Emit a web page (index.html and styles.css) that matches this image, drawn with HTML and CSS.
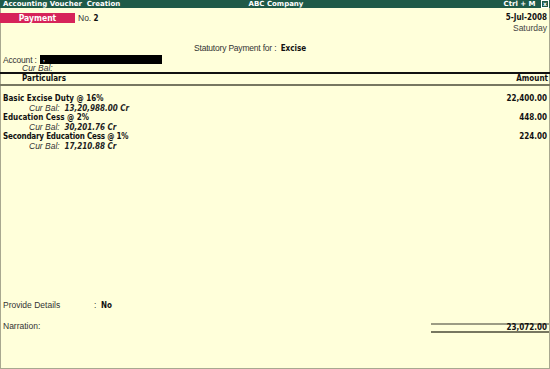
FILE: index.html
```html
<!DOCTYPE HTML>
<html>
<head>
	<meta http-equiv="content-type" content="text/html; charset=utf-8" />
	<title>Accounting Voucher Creation</title>
	<link rel="stylesheet" href="styles.css">
</head>
<body>
	<div class="screen">
		<div class="titlebar">
			<span class="t-left">Accounting Voucher&nbsp; Creation</span>
			<span class="t-mid">ABC Company</span>
			<span class="t-right">Ctrl + M <span class="closebox">x</span></span>
		</div>

		<div class="head">
			<div class="head-left">
				<span class="vtype">Payment</span>
				<span class="vno">No. <b>2</b></span>
			</div>
			<div class="head-right">
				<div class="date">5-Jul-2008</div>
				<div class="day">Saturday</div>
			</div>
		</div>

		<div class="statutory">Statutory Payment for : &nbsp;<b>Excise</b></div>

		<div class="account">
			<span>Account :</span>
			<span class="blackout">,</span>
		</div>
		<div class="curbal acc-bal">Cur Bal:</div>

		<div class="colhead">
			<span class="col-part">Particulars</span>
			<span class="col-amt">Amount</span>
		</div>

		<div class="rows">
			<div class="row">
				<span class="ledger">Basic Excise Duty @ 16%</span>
				<span class="amt">22,400.00</span>
			</div>
			<div class="curbal">Cur Bal: &nbsp;<b>13,20,988.00 Cr</b></div>
			<div class="row">
				<span class="ledger">Education Cess @ 2%</span>
				<span class="amt">448.00</span>
			</div>
			<div class="curbal">Cur Bal: &nbsp;<b>30,201.76 Cr</b></div>
			<div class="row">
				<span class="ledger small">Secondary Education Cess @ 1%</span>
				<span class="amt">224.00</span>
			</div>
			<div class="curbal">Cur Bal: &nbsp;<b>17,210.88 Cr</b></div>
		</div>

		<div class="foot">
			<div class="details">
				<span class="lbl">Provide Details</span>
				<span class="val">: &nbsp;<b>No</b></span>
			</div>
			<div class="narration">
				<span>Narration:</span>
				<span class="total">23,072.00</span>
			</div>
		</div>
	</div>
</body>
</html>
```

FILE: styles.css
```css
* {
	margin: 0;
	padding: 0;
}

html, body {
	width: 100%;
	height: 100%;
	background-color: #ffffda;
}

.screen {
	height: 369px;
	box-sizing: border-box;
	border-left: 1px solid #a8a890;
	border-right: 1px solid #a8a890;
	border-bottom: 1px solid #a8a890;
	display: flex;
	flex-direction: column;
	font-family: "Liberation Sans", Arial, sans-serif;
	font-size: 8.5px;
	color: #333;
	background-color: #ffffda;
}

b, .date, .vtype, .colhead, .row, .total {
	font-family: "DejaVu Sans Condensed", "DejaVu Sans", Tahoma, sans-serif;
	font-size: 8px;
	font-weight: bold;
	color: #111;
}

/* Заголовок */

.titlebar {
	height: 8px;
	line-height: 8px;
	background-color: #1f5a48;
	color: #fff;
	font-family: "DejaVu Sans", Tahoma, sans-serif;
	font-weight: bold;
	font-size: 7px;
	display: flex;
	justify-content: space-between;
	padding: 0 1px 0 3px;
	margin-left: -1px;
	margin-right: -1px;
}

.t-left, .t-right {
	width: 120px;
}

.t-right {
	text-align: right;
}

.closebox {
	display: inline-block;
	width: 6px;
	height: 6px;
	line-height: 6px;
	margin-left: 3px;
	border: 1px solid #fff;
	font-size: 6px;
	text-align: center;
	vertical-align: top;
}

/* Шапка ваучера */

.head {
	display: flex;
	justify-content: space-between;
	margin-top: 5px;
}

.head-left {
	display: flex;
	align-items: center;
	height: 10px;
}

.vtype {
	width: 75px;
	height: 10px;
	line-height: 10px;
	background-color: #d6245a;
	color: #fff;
	text-align: center;
	margin-left: -1px;
	font-size: 8.5px;
}

.vno {
	margin-left: 3px;
}

.head-right {
	text-align: right;
	padding-right: 2px;
}

.date {
	line-height: 10px;
}

.day {
	line-height: 10px;
	color: #444;
}

.statutory {
	margin-top: 10px;
	padding-left: 193px;
	line-height: 10px;
	letter-spacing: -0.2px;
}

.statutory b {
	letter-spacing: 0;
}

.account {
	display: flex;
	align-items: center;
	padding-left: 2px;
	height: 11px;
	letter-spacing: -0.2px;
}

.blackout {
	display: inline-block;
	width: 122px;
	height: 9px;
	background-color: #000;
	color: #fff;
	line-height: 6px;
	padding-left: 3px;
	box-sizing: border-box;
	margin-left: 3px;
}

.curbal {
	font-style: italic;
	padding-left: 28px;
	line-height: 9px;
	font-size: 8.5px;
	color: #333;
}

.curbal b {
	font-style: italic;
	color: #222;
}

.acc-bal {
	padding-left: 21px;
	line-height: 7px;
}

/* Колонки */

.colhead {
	display: flex;
	justify-content: space-between;
	border-top: 2px solid #111;
	border-bottom: 2px solid #777760;
	height: 10px;
	line-height: 10px;
	margin-left: -1px;
	margin-right: -1px;
	padding: 0 2px 0 22px;
}

.rows {
	margin-top: 8px;
	flex: 1;
}

.row {
	display: flex;
	justify-content: space-between;
	line-height: 10px;
	padding: 0 2px 0 2px;
}

.ledger.small {
	letter-spacing: -0.2px;
}

/* Подвал */

.foot {
	padding-bottom: 35px;
}

.details {
	display: flex;
	line-height: 10px;
	padding-left: 2px;
}

.lbl {
	width: 91px;
}

.narration {
	display: flex;
	justify-content: space-between;
	align-items: flex-start;
	line-height: 10px;
	margin-top: 10px;
	padding-left: 2px;
}

.total {
	width: 116px;
	height: 6px;
	line-height: 6px;
	margin-top: 2px;
	text-align: right;
	border-top: 2px solid #9c9c84;
	border-bottom: 2px solid #777760;
	padding-right: 2px;
	box-sizing: content-box;
}
```
